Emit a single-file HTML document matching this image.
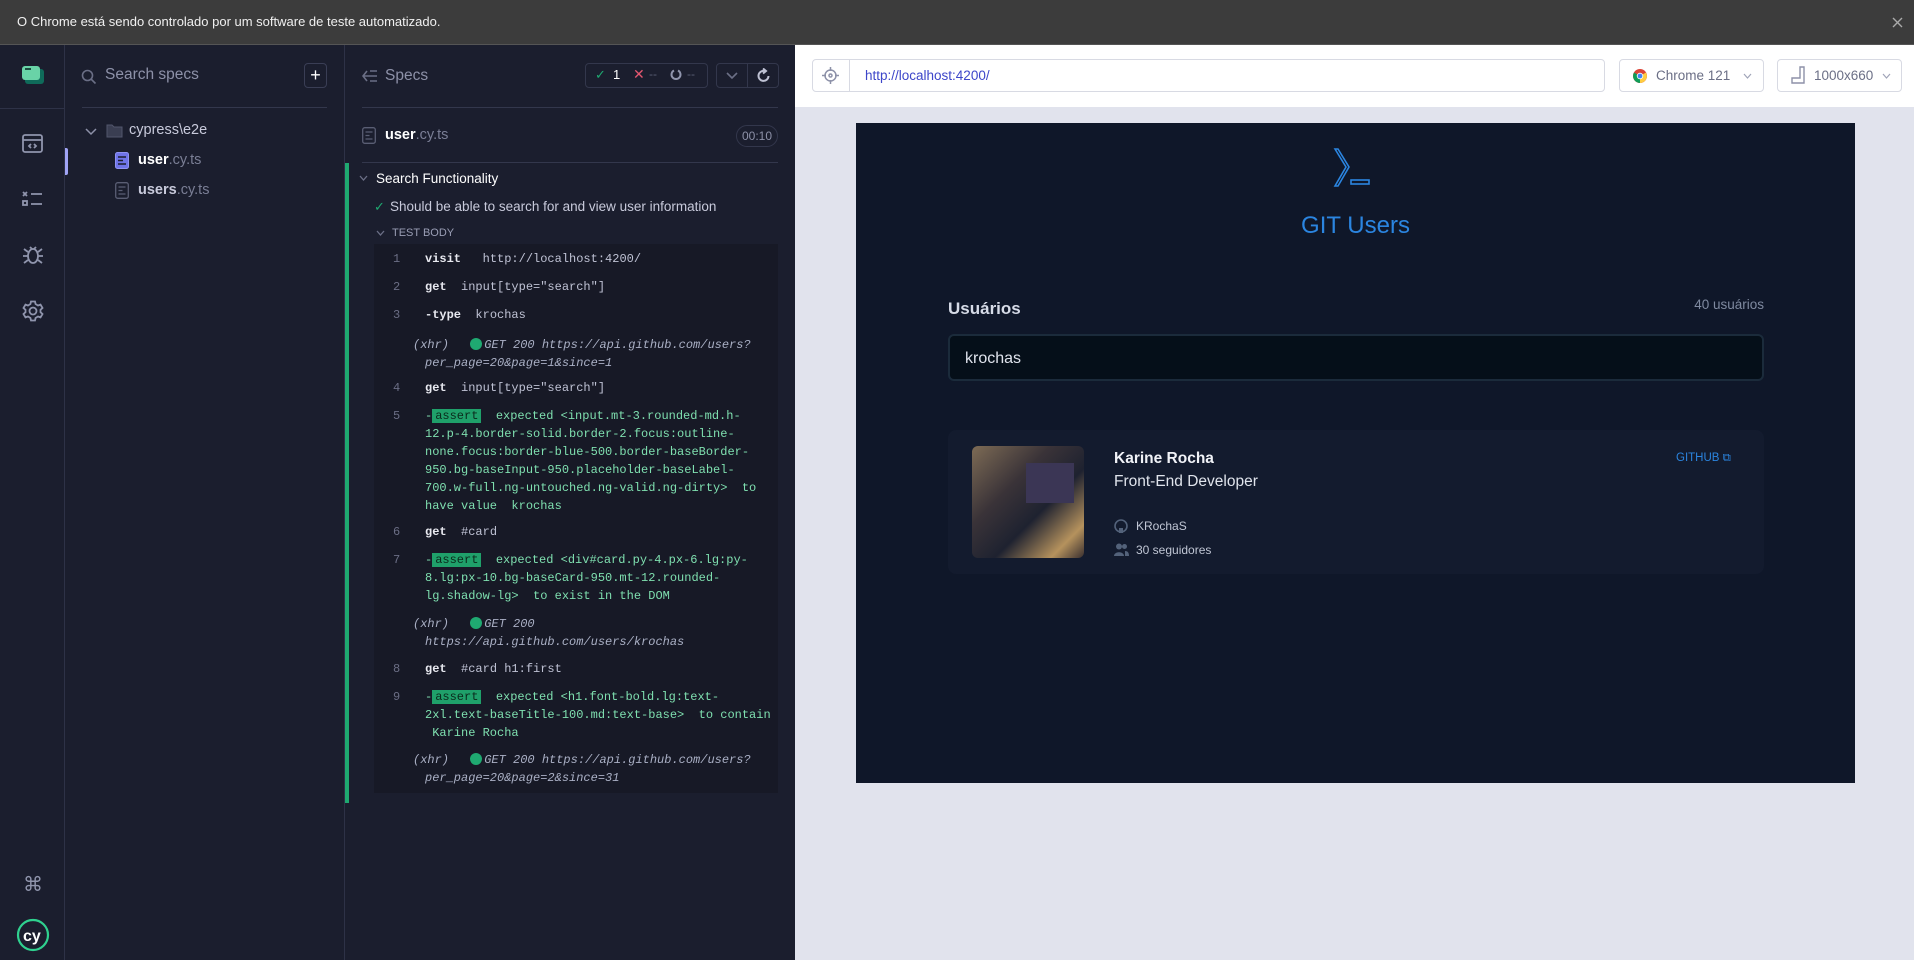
<!DOCTYPE html>
<html><head><meta charset="utf-8"><style>
*{box-sizing:border-box;margin:0;padding:0}
body{width:1914px;height:960px;overflow:hidden;background:#1b1e2e;font-family:"Liberation Sans",sans-serif;position:relative;color:#d0d2e0}
.a{position:absolute}
.top{left:0;top:0;width:1914px;height:45px;background:#3c3c3c;border-bottom:1px solid #555}
.top span{position:absolute;left:17px;top:14px;font-size:13px;color:#f0f0f0}
.nav{left:0;top:45px;width:65px;height:915px;background:#1b1e2e;border-right:1px solid #2e3247}
.specs{left:65px;top:45px;width:280px;height:915px;background:#1b1e2e;border-right:1px solid #2e3247}
.runner{left:345px;top:45px;width:450px;height:915px;background:#1b1e2e}
.aut{left:795px;top:45px;width:1119px;height:915px;background:#e1e3ed}
.mono{font-family:"Liberation Mono",monospace;font-size:12px}
.ln{position:absolute;left:393px;color:#6b6e85}
.cm{position:absolute;left:425px;color:#bfc2d4;line-height:18px;white-space:pre}
.cm b{color:#e8e9f0}
.g{color:#7fe0b0}
.badge{background:#1fa06a;color:#0b2a1c;padding:0 3px}
.x{color:#aab0c5;font-style:italic}
.x .f{margin-left:-12px}
.dot{display:inline-block;width:12px;height:12px;border-radius:6px;background:#1fa971;vertical-align:-2px;margin:0 2px 0 14px}
</style></head><body>
<div class="a top"><span>O Chrome está sendo controlado por um software de teste automatizado.</span>
<svg class="a" style="left:1892px;top:17px" width="11" height="11"><path d="M1 1L10 10M10 1L1 10" stroke="#aaa" stroke-width="1.4"/></svg></div>

<div class="a nav">
 <div class="a" style="left:0;top:63px;width:64px;height:1px;background:#2e3247"></div>
 <svg class="a" style="left:21px;top:20px" width="24" height="20"><rect x="4" y="4" width="19" height="15" rx="3" fill="#0f6b5a"/><rect x="1" y="1" width="18" height="14" rx="3" fill="#69d3a7"/><rect x="4" y="3" width="6" height="2" fill="#1b4d40"/></svg>
 <svg class="a" style="left:22px;top:89px" width="22" height="20" fill="none" stroke="#9095ad" stroke-width="1.8"><rect x="1" y="1" width="19" height="17" rx="2"/><path d="M1 6H20M9 10L7 12L9 14M12 10L14 12L12 14"/></svg>
 <svg class="a" style="left:22px;top:145px" width="22" height="20" fill="none" stroke="#9095ad" stroke-width="1.8"><path d="M1 2L5 6M5 2L1 6M9 4H20M9 14H20"/><rect x="1" y="11" width="4" height="4"/></svg>
 <svg class="a" style="left:22px;top:199px" width="22" height="22" fill="none" stroke="#9095ad" stroke-width="1.8"><ellipse cx="11" cy="12" rx="5" ry="7"/><path d="M6 12H1M16 12H21M6 8L2 5M16 8L20 5M6 16L2 19M16 16L20 19M8 3L10 5M14 3L12 5"/></svg>
 <svg class="a" style="left:22px;top:255px" width="22" height="22" fill="none" stroke="#9095ad" stroke-width="1.8"><circle cx="11" cy="11" r="3.5"/><path d="M9 1.5h4l.6 2.6 2.4 1.4 2.5-.9 2 3.4-2 1.8v2.4l2 1.8-2 3.4-2.5-.9-2.4 1.4L13 20.5H9l-.6-2.6-2.4-1.4-2.5.9-2-3.4 2-1.8V9.8l-2-1.8 2-3.4 2.5.9 2.4-1.4z"/></svg>
 <div class="a" style="left:23px;top:827px;font-size:20px;color:#9095ad">⌘</div>
 <svg class="a" style="left:16px;top:873px" width="34" height="34"><circle cx="17" cy="17" r="15" fill="none" stroke="#2fd18f" stroke-width="2.2"/><text x="7" y="23" font-family="Liberation Sans" font-size="16" font-weight="bold" fill="#fff">cy</text></svg>
</div>

<div class="a specs">
 <svg class="a" style="left:16px;top:24px" width="16" height="16" fill="none" stroke="#6b6f86" stroke-width="1.6"><circle cx="6.5" cy="6.5" r="5"/><path d="M10 10L14.5 14.5"/></svg>
 <div class="a" style="left:40px;top:21px;font-size:15.5px;color:#8d91a8">Search specs</div>
 <div class="a" style="left:239px;top:18px;width:23px;height:25px;border:1px solid #3a3e55;border-radius:4px;color:#fff;font-size:18px;text-align:center;line-height:22px">+</div>
 <div class="a" style="left:17px;top:62px;width:245px;height:1px;background:#33374c"></div>
 <svg class="a" style="left:20px;top:82px" width="12" height="10" fill="none" stroke="#8d91a8" stroke-width="1.5"><path d="M1 2L6 7L11 2"/></svg>
 <svg class="a" style="left:41px;top:78px" width="17" height="15" fill="#3a3e52" stroke="#52566c"><path d="M1 2h5l2 2h8v10H1z"/></svg>
 <div class="a" style="left:64px;top:77px;font-size:14.5px;color:#c8cadb">cypress\e2e</div>
 <div class="a" style="left:0;top:103px;width:3px;height:27px;background:#a0a4f5;border-radius:0 2px 2px 0"></div>
 <svg class="a" style="left:50px;top:107px" width="14" height="17"><rect x=".5" y=".5" width="13" height="16" rx="2" fill="#6f74e8" stroke="#8f93f5"/><path d="M3 5h8M3 8.5h5M3 12h8" stroke="#1b1e2e" stroke-width="1.4"/></svg>
 <div class="a" style="left:73px;top:107px;font-size:14.5px;color:#fff"><b>user</b><span style="color:#7a7e95">.cy.ts</span></div>
 <svg class="a" style="left:50px;top:137px" width="14" height="17" fill="none" stroke="#5a5e74" stroke-width="1.3"><rect x=".7" y=".7" width="12.6" height="15.6" rx="2"/><path d="M3.5 5h7M3.5 8.5h4M3.5 12h7"/></svg>
 <div class="a" style="left:73px;top:137px;font-size:14.5px;color:#c8cadb"><b>users</b><span style="color:#7a7e95">.cy.ts</span></div>
</div>

<div class="a runner">
 <svg class="a" style="left:17px;top:24px" width="16" height="14" fill="none" stroke="#6b6f86" stroke-width="1.6"><path d="M5 2L1 7L5 12M1 7H15M8 2H15M8 12H15"/></svg>
 <div class="a" style="left:40px;top:22px;font-size:15.5px;color:#8d91a8">Specs</div>
 <div class="a" style="left:240px;top:18px;width:123px;height:25px;border:1px solid #33374c;border-radius:4px"></div>
 <div class="a" style="left:250px;top:22px;font-size:13px;color:#1fa971">✓</div>
 <div class="a" style="left:268px;top:22px;font-size:13px;color:#fff">1</div>
 <div class="a" style="left:288px;top:21px;font-size:14px;color:#e45770">✕</div>
 <div class="a" style="left:304px;top:22px;font-size:12px;color:#5a5e74">--</div>
 <svg class="a" style="left:325px;top:24px" width="12" height="12" fill="none" stroke="#9095ad" stroke-width="2"><path d="M4 1.5A4.5 4.5 0 1 0 8 1.5"/></svg>
 <div class="a" style="left:342px;top:22px;font-size:12px;color:#5a5e74">--</div>
 <div class="a" style="left:371px;top:18px;width:63px;height:25px;border:1px solid #33374c;border-radius:4px"></div>
 <div class="a" style="left:402px;top:18px;width:1px;height:25px;background:#33374c"></div>
 <svg class="a" style="left:381px;top:27px" width="12" height="8" fill="none" stroke="#6b6f86" stroke-width="1.6"><path d="M1 1L6 6L11 1"/></svg>
 <svg class="a" style="left:411px;top:23px" width="15" height="15" fill="none" stroke="#bfc2d4" stroke-width="2"><path d="M12.5 8A5 5 0 1 1 8.5 3"/><path d="M7 0.5L10 3L7 5.5" /></svg>
 <div class="a" style="left:17px;top:62px;width:416px;height:1px;background:#33374c"></div>
 <svg class="a" style="left:17px;top:82px" width="14" height="17" fill="none" stroke="#5a5e74" stroke-width="1.3"><rect x=".7" y=".7" width="12.6" height="15.6" rx="2"/><path d="M3.5 5h7M3.5 8.5h4M3.5 12h7"/></svg>
 <div class="a" style="left:40px;top:82px;font-size:14.5px;color:#fff"><b>user</b><span style="color:#7a7e95">.cy.ts</span></div>
 <div class="a" style="left:391px;top:80px;width:42px;height:22px;border:1px solid #33374c;border-radius:11px;font-size:12px;color:#8d91a8;text-align:center;line-height:20px">00:10</div>
 <div class="a" style="left:17px;top:117px;width:416px;height:1px;background:#33374c"></div>
 <div class="a" style="left:0;top:118px;width:4px;height:640px;background:#1fa971"></div>
 <svg class="a" style="left:14px;top:130px" width="9" height="6" fill="none" stroke="#6b6f86" stroke-width="1.3"><path d="M1 1L4.5 5L8 1"/></svg>
 <div class="a" style="left:31px;top:126px;font-size:13.5px;color:#fff">Search Functionality</div>
 <div class="a" style="left:29px;top:154px;font-size:13px;color:#1fa971">✓</div>
 <div class="a" style="left:45px;top:154px;font-size:13.5px;color:#c8cadb">Should be able to search for and view user information</div>
 <svg class="a" style="left:31px;top:185px" width="9" height="6" fill="none" stroke="#6b6f86" stroke-width="1.3"><path d="M1 1L4.5 5L8 1"/></svg>
 <div class="a" style="left:47px;top:182px;font-size:11px;color:#9a9eb5">TEST BODY</div>
 <div class="a" style="left:29px;top:199px;width:404px;height:549px;background:#171926"></div>
</div>

<div class="a mono" style="left:0;top:0;width:795px;height:960px">
 <div class="ln" style="top:252px">1</div><div class="cm" style="top:250px"><b>visit</b>   http://localhost:4200/</div>
 <div class="ln" style="top:280px">2</div><div class="cm" style="top:278px"><b>get</b>  input[type="search"]</div>
 <div class="ln" style="top:308px">3</div><div class="cm" style="top:306px"><b>-type</b>  krochas</div>
 <div class="cm x" style="top:336px"><span class="f">(xhr)</span> <span class="dot"></span>GET 200 https://api.github.com/users?
per_page=20&amp;page=1&amp;since=1</div>
 <div class="ln" style="top:381px">4</div><div class="cm" style="top:379px"><b>get</b>  input[type="search"]</div>
 <div class="ln" style="top:409px">5</div><div class="cm g" style="top:407px">-<span class="badge">assert</span>  expected &lt;input.mt-3.rounded-md.h-
12.p-4.border-solid.border-2.focus:outline-
none.focus:border-blue-500.border-baseBorder-
950.bg-baseInput-950.placeholder-baseLabel-
700.w-full.ng-untouched.ng-valid.ng-dirty&gt;  to
have value  krochas</div>
 <div class="ln" style="top:525px">6</div><div class="cm" style="top:523px"><b>get</b>  #card</div>
 <div class="ln" style="top:553px">7</div><div class="cm g" style="top:551px">-<span class="badge">assert</span>  expected &lt;div#card.py-4.px-6.lg:py-
8.lg:px-10.bg-baseCard-950.mt-12.rounded-
lg.shadow-lg&gt;  to exist in the DOM</div>
 <div class="cm x" style="top:615px"><span class="f">(xhr)</span> <span class="dot"></span>GET 200
https://api.github.com/users/krochas</div>
 <div class="ln" style="top:662px">8</div><div class="cm" style="top:660px"><b>get</b>  #card h1:first</div>
 <div class="ln" style="top:690px">9</div><div class="cm g" style="top:688px">-<span class="badge">assert</span>  expected &lt;h1.font-bold.lg:text-
2xl.text-baseTitle-100.md:text-base&gt;  to contain
 Karine Rocha</div>
 <div class="cm x" style="top:751px"><span class="f">(xhr)</span> <span class="dot"></span>GET 200 https://api.github.com/users?
per_page=20&amp;page=2&amp;since=31</div>
</div>

<div class="a aut">
 <div class="a" style="left:0;top:0;width:1119px;height:62px;background:#fff"></div>
 <div class="a" style="left:17px;top:14px;width:793px;height:33px;border:1px solid #d8dae3;border-radius:4px;background:#fff"></div>
 <div class="a" style="left:54px;top:14px;width:1px;height:33px;background:#d8dae3"></div>
 <svg class="a" style="left:27px;top:22px" width="17" height="17" fill="none" stroke="#8d91a8" stroke-width="1.5"><circle cx="8.5" cy="8.5" r="5.5"/><circle cx="8.5" cy="8.5" r="1.5"/><path d="M8.5 0V4M8.5 13V17M0 8.5H4M13 8.5H17"/></svg>
 <div class="a" style="left:70px;top:23px;font-size:13.5px;color:#3d46c9">http://localhost:4200/</div>
 <div class="a" style="left:824px;top:14px;width:145px;height:33px;border:1px solid #d8dae3;border-radius:4px"></div>
 <svg class="a" style="left:838px;top:24px" width="14" height="14"><circle cx="7" cy="7" r="7" fill="#db4437"/><path d="M7 7L1 3.5A7 7 0 0 0 7 14Z" fill="#0f9d58"/><path d="M7 7L7 14A7 7 0 0 0 13 3.5Z" fill="#ffcd40"/><circle cx="7" cy="7" r="3.2" fill="#fff"/><circle cx="7" cy="7" r="2.4" fill="#4285f4"/></svg>
 <div class="a" style="left:861px;top:23px;font-size:13.5px;color:#6b6f86">Chrome 121</div>
 <svg class="a" style="left:948px;top:28px" width="9" height="6" fill="none" stroke="#a0a4b8" stroke-width="1.2"><path d="M1 1L4.5 5L8 1"/></svg>
 <div class="a" style="left:982px;top:14px;width:125px;height:33px;border:1px solid #d8dae3;border-radius:4px"></div>
 <svg class="a" style="left:996px;top:21px" width="14" height="18" fill="none" stroke="#8d91a8" stroke-width="1.4"><path d="M9 1H13V17H1V12H9Z"/></svg>
 <div class="a" style="left:1019px;top:23px;font-size:13.5px;color:#6b6f86">1000x660</div>
 <svg class="a" style="left:1087px;top:28px" width="9" height="6" fill="none" stroke="#a0a4b8" stroke-width="1.2"><path d="M1 1L4.5 5L8 1"/></svg>

 <div class="a" style="left:61px;top:78px;width:999px;height:660px;background:#0f1729">
  <svg class="a" style="left:477px;top:25px" width="46" height="40" fill="none" stroke="#2b85e0" stroke-width="1.6"><path d="M2 1L13 19L2 38L5 38L16 19L5 1Z"/><rect x="18" y="32" width="18" height="4"/></svg>
  <div class="a" style="left:0;top:89px;width:999px;text-align:center;font-size:24px;color:#2b85e0">GIT Users</div>
  <div class="a" style="left:92px;top:176px;font-size:17px;font-weight:bold;color:#d6dbe7">Usuários</div>
  <div class="a" style="left:780px;top:174px;width:128px;text-align:right;font-size:13.5px;color:#7f8aa0">40 usuários</div>
  <div class="a" style="left:92px;top:211px;width:816px;height:47px;background:#050f19;border:2px solid #1b2b3b;border-radius:6px"></div>
  <div class="a" style="left:109px;top:227px;font-size:16px;color:#dfe3ec">krochas</div>
  <div class="a" style="left:92px;top:307px;width:816px;height:144px;background:#131b2e;border-radius:8px"></div>
  <div class="a" style="left:116px;top:323px;width:112px;height:112px;border-radius:6px;background:linear-gradient(135deg,#7d6b55 0%,#3a3338 35%,#1e2230 60%,#b5925d 85%,#3a3030 100%)"></div>
  <div class="a" style="left:170px;top:340px;width:48px;height:40px;background:#3b3655"></div>
  <div class="a" style="left:258px;top:327px;font-size:15.5px;font-weight:bold;color:#f0f2f7">Karine Rocha</div>
  <div class="a" style="left:258px;top:350px;font-size:15.5px;color:#e0e4ec">Front-End Developer</div>
  <svg class="a" style="left:258px;top:396px" width="14" height="14"><circle cx="7" cy="7" r="6" fill="none" stroke="#53627a" stroke-width="1.6"/><rect x="5" y="9" width="4" height="5" fill="#53627a"/></svg>
  <div class="a" style="left:280px;top:396px;font-size:12px;color:#c0c6d4">KRochaS</div>
  <svg class="a" style="left:258px;top:420px" width="15" height="13" fill="#53627a"><circle cx="5" cy="3.5" r="3"/><path d="M0 13C0 8 10 8 10 13Z"/><circle cx="10.5" cy="3.5" r="2.5"/><path d="M11 8C14 8 15 10 15 13H11Z"/></svg>
  <div class="a" style="left:280px;top:420px;font-size:12px;color:#c0c6d4">30 seguidores</div>
  <div class="a" style="left:820px;top:329px;font-size:11.5px;color:#2b85e0">GITHUB ⧉</div>
 </div>
</div>
</body></html>
